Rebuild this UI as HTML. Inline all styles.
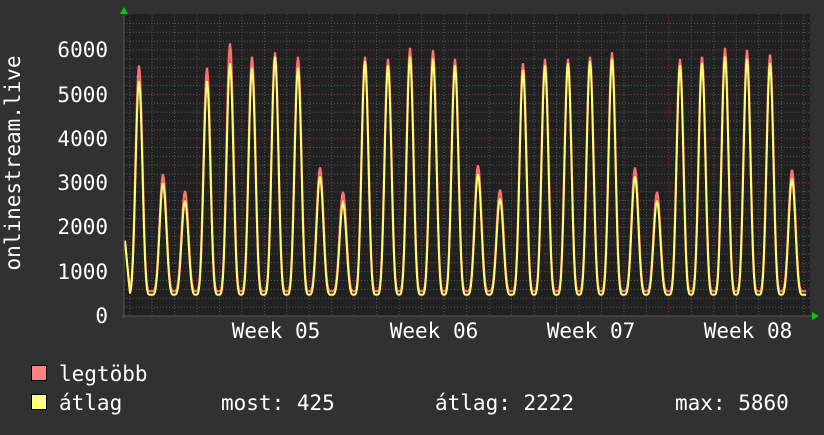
<!DOCTYPE html><html><head><style>
body{margin:0;background:#313131;width:824px;height:430px;overflow:hidden}
svg text{font-family:"DejaVu Sans Mono","Liberation Mono",monospace;fill:#fff;font-size:21px}
</style></head><body>
<svg id="s" width="824" height="430" xmlns="http://www.w3.org/2000/svg">
<rect x="124" y="14" width="686" height="302" fill="#212121"/>
<g id="grid"></g>
<path id="r" fill="none" stroke="#ff7070" stroke-width="2.2"/>
<path id="y" fill="none" stroke="#ffff70" stroke-width="2"/>
<line x1="121" y1="316" x2="815" y2="316" stroke="#555"/>
<line x1="124" y1="12" x2="124" y2="318" stroke="#555"/>
<polygon points="120,14 124,7 128,14" fill="#0c0"/>
<polygon points="812,312 819,316 812,320" fill="#0c0"/>
<g text-anchor="end">
<text x="108" y="57">6000</text><text x="108" y="102">5000</text><text x="108" y="146">4000</text>
<text x="108" y="190">3000</text><text x="108" y="234">2000</text><text x="108" y="279">1000</text><text x="108" y="323">0</text>
</g>
<g text-anchor="middle">
<text x="276" y="338">Week 05</text><text x="434" y="338">Week 06</text><text x="591" y="338">Week 07</text><text x="748" y="338">Week 08</text>
</g>
<text transform="translate(20,163) rotate(-90)" text-anchor="middle" font-size="21">onlinestream.live</text>
<rect x="31.5" y="365.5" width="15" height="15" fill="#ff8080" stroke="#000"/>
<rect x="31.5" y="394.5" width="15" height="15" fill="#ffff80" stroke="#000"/>
<text x="59" y="381">legtöbb</text>
<text x="59" y="410">átlag</text>
<text x="221" y="410">most: 425</text>
<text x="435" y="410">átlag: 2222</text>
<text x="675" y="410">max: 5860</text>
</svg>
<script>
var g=document.getElementById('grid'),h='';
for(var v=200;v<6700;v+=200){var yy=316-v*0.04433;if(yy<14)break;
h+='<line x1="124" x2="810" y1="'+yy+'" y2="'+yy+'" stroke="'+(v%1000==0?'#7a3a3a':'#555')+'" stroke-dasharray="1,2"/>';}
for(var x=197-22.47*3;x<810;x+=22.47){var wk=Math.abs(((x-197)/157.3)-Math.round((x-197)/157.3))<0.02;
h+='<line y1="14" y2="316" x1="'+x+'" x2="'+x+'" stroke="'+(wk?'#7a3a3a':'#555')+'" stroke-dasharray="1,2"/>';}
g.innerHTML=h;
var pk=[139,163,185,207,230,252,275,298,320,343,365,388,410,433,455,478,500,523,545,568,590,612,635,657,680,702,725,747,770,792];
var mx=[5650,3200,2820,5600,6150,5850,5950,5850,3350,2800,5850,5800,6050,6000,5800,3400,2850,5700,5800,5800,5850,5950,3350,2800,5800,5850,6050,6000,5900,3300];
var av=[5300,3000,2600,5300,5700,5600,5850,5600,3150,2550,5750,5650,5850,5800,5650,3200,2650,5550,5650,5700,5750,5800,3150,2600,5650,5700,5850,5800,5700,3100];
function val(x,arr,mn){var best=mn,bd=1e9,bi=0;for(var i=0;i<pk.length;i++){var d=Math.abs(x-pk[i]);if(d<bd){bd=d;bi=i;}}
var dd=(x-pk[bi])/22.47;if(Math.abs(dd)<0.5){var f=Math.pow(0.5+0.5*Math.cos(2*Math.PI*dd),2.2);best=mn+(arr[bi]-mn)*f;}
if(x>798)best=Math.max(425,Math.min(best,mn+300-(x-798)*20));return best;}
function path(arr,mn){var d='';for(var x=125;x<=806;x+=1){var v=val(x,arr,mn);if(x<130)v=Math.max(v,1700-(x-125)*240);d+=(x==125?'M':'L')+x+','+(316-v*0.04433).toFixed(1);}return d;}
document.getElementById('r').setAttribute('d',path(mx,560));
document.getElementById('y').setAttribute('d',path(av,480));
</script>
</body></html>
